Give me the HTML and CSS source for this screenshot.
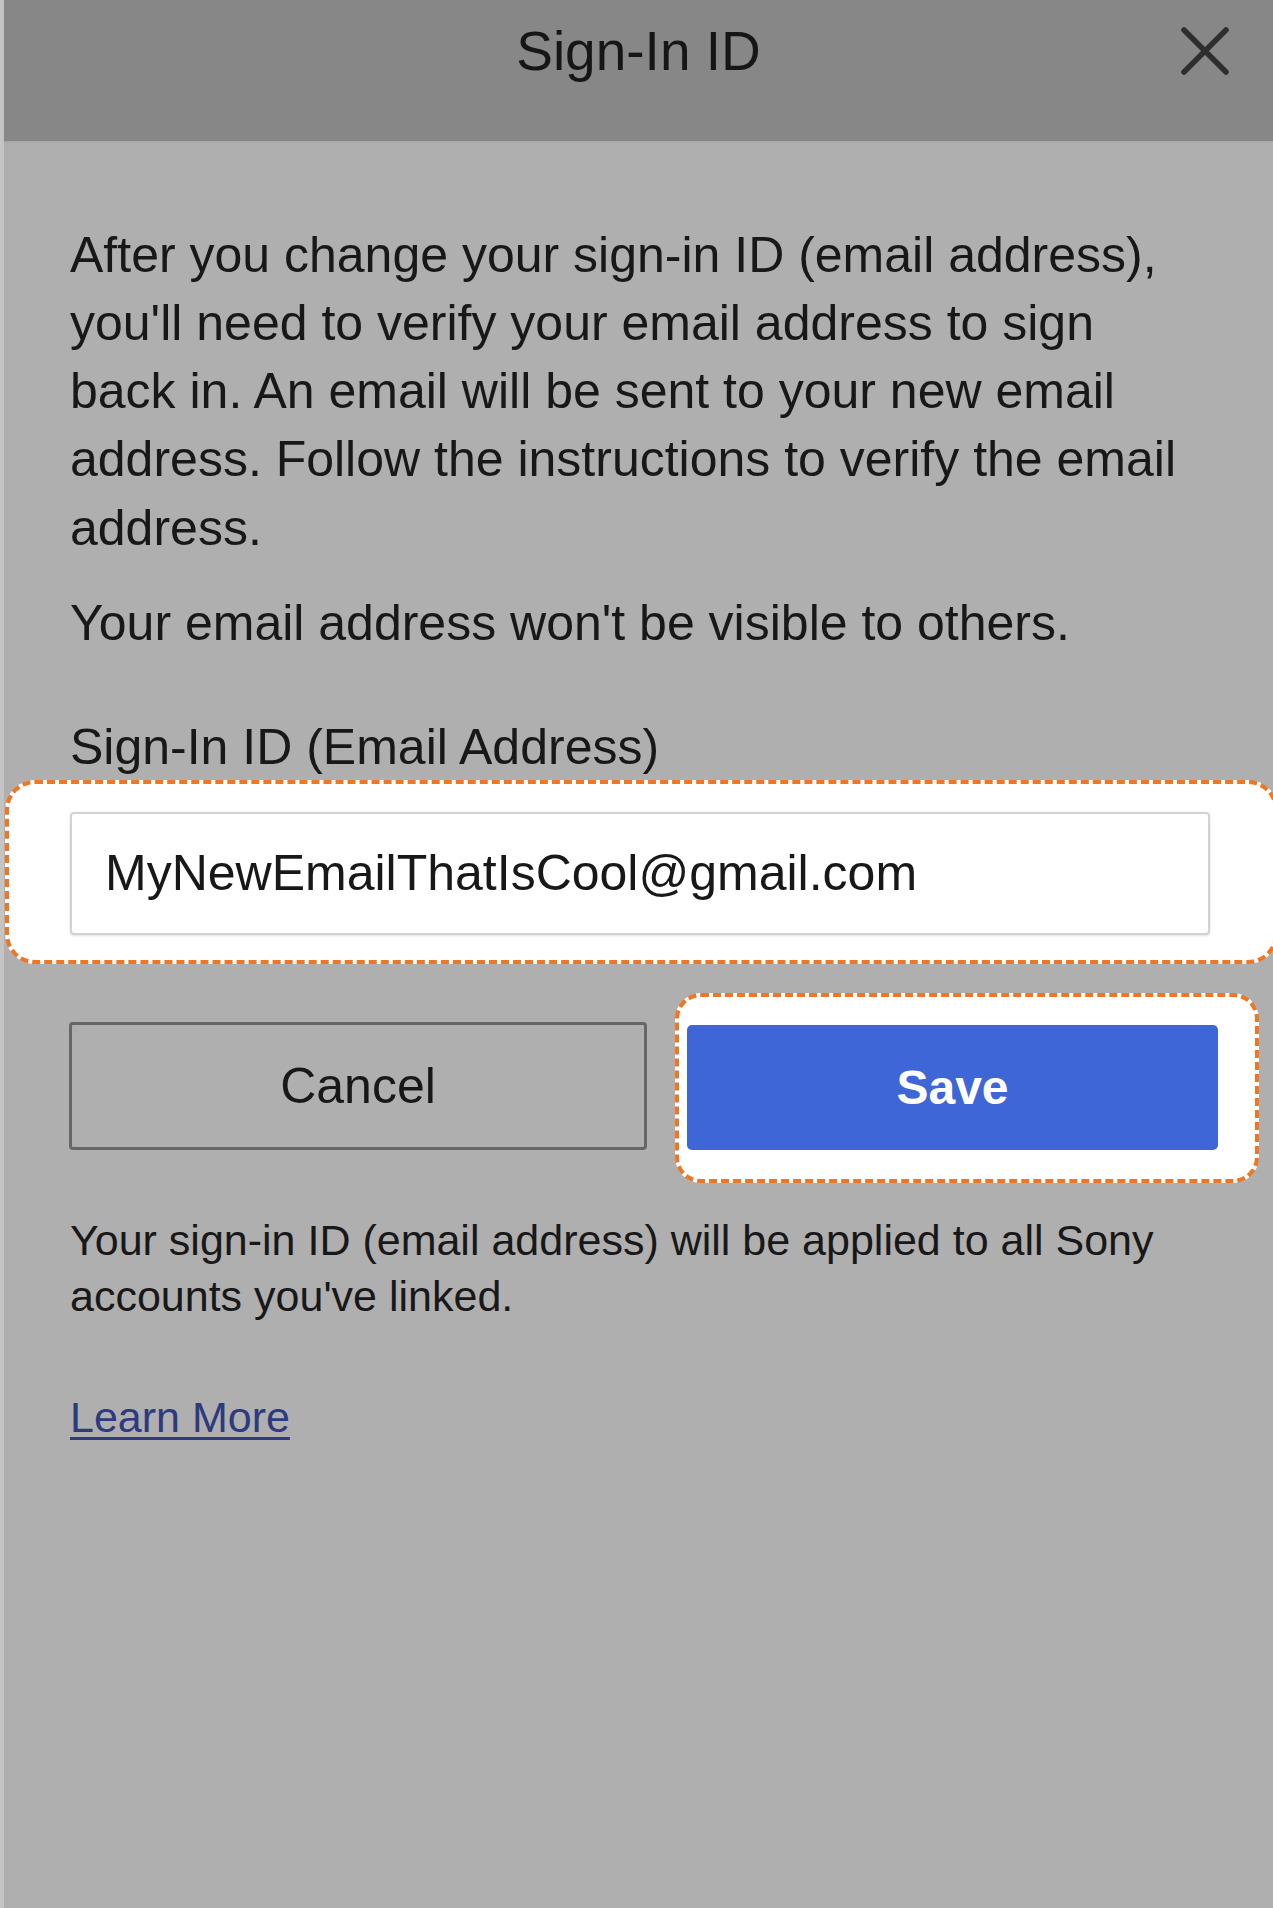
FILE: index.html
```html
<!DOCTYPE html>
<html lang="en">
<head>
<meta charset="utf-8">
<title>Sign-In ID</title>
<link rel="stylesheet" href="styles.css">
</head>
<body>
<div class="page">
  <header class="topbar">
    <span class="topbar-spacer"></span>
    <h1 class="title">Sign-In ID</h1>
    <button class="close" type="button" aria-label="Close">
      <svg class="close-icon" viewBox="0 0 50 50" width="50" height="50">
        <path d="M4 4 L46 46 M46 4 L4 46" fill="none" stroke="#2e2e2e" stroke-width="5.5" stroke-linecap="round"/>
      </svg>
    </button>
  </header>
  <main class="content">
    <p class="intro">After you change your sign-in ID (email address), you'll need to verify your email address to sign back in. An email will be sent to your new email address. Follow the instructions to verify the email address.</p>
    <p class="privacy">Your email address won't be visible to others.</p>
    <label class="field-label" for="email">Sign-In ID (Email Address)</label>
    <div class="highlight field-highlight">
      <input class="email-input" id="email" type="text" value="MyNewEmailThatIsCool@gmail.com">
    </div>
    <div class="actions">
      <button class="btn-cancel" type="button">Cancel</button>
      <div class="highlight save-highlight">
        <button class="btn-save" type="button">Save</button>
      </div>
    </div>
    <p class="note">Your sign-in ID (email address) will be applied to all Sony accounts you've linked.</p>
    <a class="learn" href="#">Learn More</a>
  </main>
</div>
</body>
</html>
```
FILE: styles.css
```css
html, body {
  margin: 0;
  padding: 0;
}

body {
  background: #afafaf;
  overflow-x: hidden;
  font-family: "Liberation Sans", Arial, sans-serif;
  color: #181818;
}

.page {
  min-height: 1908px;
  border-left: 4px solid #c4c4c4;
  background: #afafaf;
  box-sizing: border-box;
}

.topbar {
  height: 141px;
  box-sizing: border-box;
  padding-top: 24px;
  background: #878787;
  display: grid;
  grid-template-columns: 1fr auto 1fr;
  align-items: start;
  box-shadow: 0 1px 2px rgba(0, 0, 0, 0.08);
}

.title {
  margin: 0;
  font-size: 55px;
  line-height: 55px;
  font-weight: 400;
  color: #161616;
  white-space: nowrap;
}

.close {
  justify-self: end;
  margin: 2px 43px 0 0;
  padding: 0;
  border: 0;
  background: none;
  width: 50px;
  height: 50px;
  cursor: pointer;
}

.close-icon {
  display: block;
}

.content {
  padding: 79.5px 63px 0 66px;
}

.intro,
.privacy {
  margin: 0;
  max-width: 1120px;
  font-size: 50px;
  line-height: 68.3px;
}

.privacy {
  margin-top: 27.5px;
}

.field-label {
  display: block;
  margin-top: 55.7px;
  margin-bottom: -2px;
  font-size: 50px;
  line-height: 68.3px;
}

.highlight {
  background: #ffffff;
  border: 4px dashed #ef7622;
  border-radius: 30px;
}

.field-highlight {
  margin: 0 -68px 0 -65px;
  padding: 28px 64px 25px 61px;
}

.email-input {
  display: block;
  width: 100%;
  height: 123px;
  box-sizing: border-box;
  padding: 0 33px;
  border: 2px solid #d2d2d2;
  border-radius: 4px;
  background: #ffffff;
  box-shadow: 0 1px 3px rgba(0, 0, 0, 0.12);
  font-family: "Liberation Sans", Arial, sans-serif;
  font-size: 50px;
  color: #181818;
  outline: none;
}

.actions {
  display: flex;
  align-items: flex-start;
  gap: 28px;
  margin-top: 29px;
  margin-left: -1px;
}

.btn-cancel {
  flex: none;
  width: 578px;
  height: 128px;
  margin-top: 29px;
  box-sizing: border-box;
  border: 3px solid #666666;
  border-radius: 4px;
  background: transparent;
  font-family: "Liberation Sans", Arial, sans-serif;
  font-size: 50px;
  color: #181818;
  padding: 0;
}

.save-highlight {
  flex: none;
  width: 584px;
  box-sizing: border-box;
  padding: 28px 37px 29px 8px;
  border-radius: 26px;
}

.btn-save {
  display: block;
  width: 100%;
  height: 125px;
  border: 0;
  border-radius: 5px;
  background: #3e66d6;
  color: #ffffff;
  font-family: "Liberation Sans", Arial, sans-serif;
  font-size: 48px;
  font-weight: 700;
  padding: 0;
}

.note {
  margin: 29px 0 0;
  max-width: 1120px;
  font-size: 43px;
  line-height: 56px;
}

.learn {
  display: inline-block;
  margin-top: 65px;
  font-size: 43px;
  line-height: 56px;
  color: #2d3a7e;
  text-decoration: underline;
  text-decoration-thickness: 3px;
  text-underline-offset: 5px;
}
```
